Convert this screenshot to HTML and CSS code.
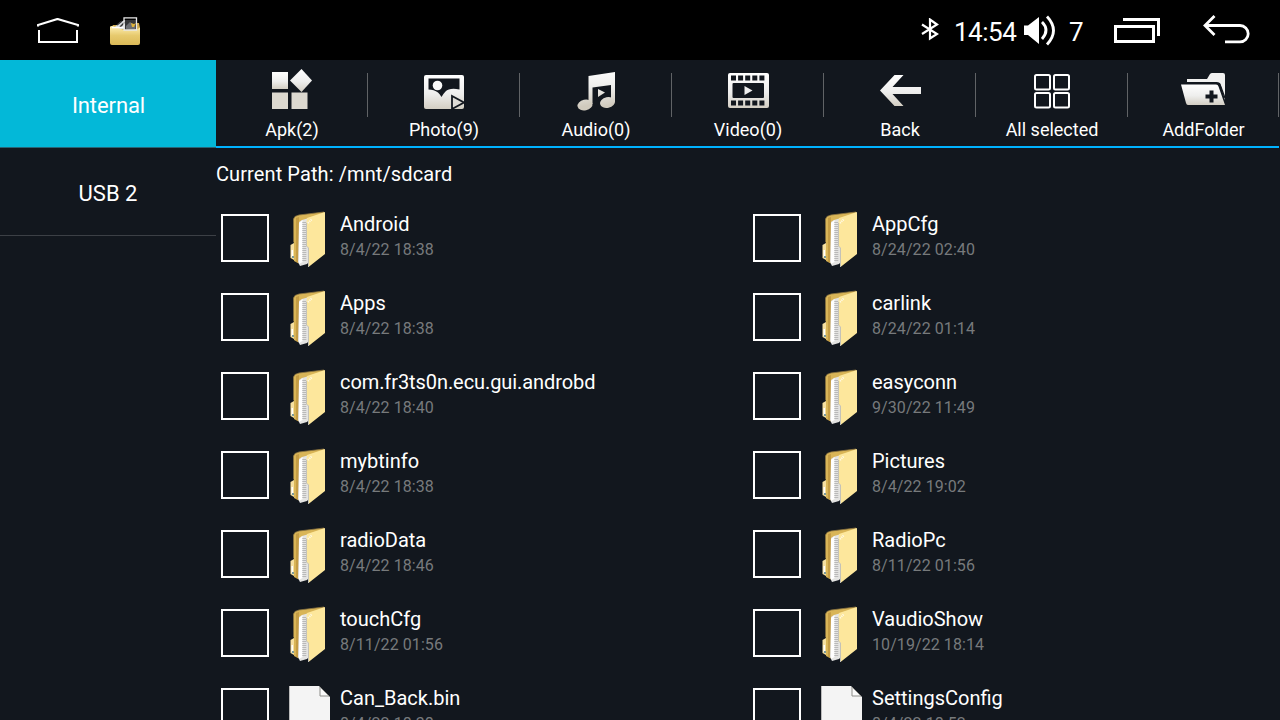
FILE: index.html
```html
<!DOCTYPE html>
<html lang="en">
<head>
<meta charset="utf-8">
<title>File manager</title>
<link rel="stylesheet" href="styles.css">
</head>
<body>
<svg class="defs" width="0" height="0" aria-hidden="true">
  <defs>
    <linearGradient id="silver" x1="0" y1="0" x2="0" y2="1"><stop offset="0" stop-color="#fff"/><stop offset=".55" stop-color="#eeeeed"/><stop offset="1" stop-color="#d3cec3"/></linearGradient>
    <linearGradient id="silverPage" gradientUnits="userSpaceOnUse" x1="0" y1="4" x2="0" y2="42"><stop offset="0" stop-color="#fff"/><stop offset=".5" stop-color="#eeeeec"/><stop offset="1" stop-color="#d0cabd"/></linearGradient>
    <linearGradient id="gold" x1="0" y1="0" x2="0" y2="1"><stop offset="0" stop-color="#fff0b4"/><stop offset=".5" stop-color="#e7ca6e"/><stop offset="1" stop-color="#dbb957"/></linearGradient>
  </defs>
  <symbol id="folder" viewBox="0 0 40 60">
    <path d="M3.500 9 5 6.500 9 5 34 2v8L15 52l-5 2-6-3z" fill="#d9b557"/>
    <path d="M3.500 32V9L5 6.500 9 5 34 2" fill="none" stroke="#8a7340" stroke-width=".8"/>
    <path d="M6 8 9 7v46l-3-1z" fill="#c49c44"/>
    <path d="M.5 35 4 33v17l-3.500-2z" fill="#f6e0a0"/><path d="M1.500 40h1.500v7h-1.500z" fill="#fff"/><path d="M2 46h2v2h-2z" fill="#7a9a9c"/>
    <path d="M9 12 12 10 30 5v35L17 54l-7 2-2-4z" fill="#e4e4e2"/>
    <path d="M9 13 12.500 10v42L9 54z" fill="#fff"/>
    <path d="M14.300 12v40" stroke="#b9b9b9" stroke-width="4" stroke-dasharray="1 1"/>
    <path d="M17 8 35 2v42L18.500 57V38l-2-2V12z" fill="#fde79c"/>
    <path d="M16.500 13v23l2 2v19" fill="none" stroke="#c4c2b8" stroke-width="1"/>
    <path d="M18 13l4-4" stroke="#fffbed" stroke-width="2" stroke-dasharray="1 1"/>
  </symbol>
  <symbol id="file" viewBox="0 0 41 60">
    <path d="M0 0H30L41 11V60H0z" fill="#f4f4f4"/>
    <path d="M.5 0v60" stroke="#bbb"/>
    <path d="M31 1v9h9z" fill="#fafafa" stroke="#8c8c88"/>
  </symbol>
</svg>

<header class="status">
  <svg class="home" width="42" height="28" viewBox="0 0 42 28"><path d="M1 8.500V7L20.500 1 41 7v1.500" fill="none" stroke="#fff" stroke-width="2.200"/><path d="M2 12v12H40V12" fill="none" stroke="#fff" stroke-width="2"/></svg>
  <svg class="app" width="32" height="30" viewBox="0 0 32 30">
    <path d="M1 11 3 8h8l2-2h16l1 5v14H1z" fill="#cda94c"/>
    <path d="M5 10 10 5l5-2v9H3z" fill="#d6d9df"/><path d="M7 8 12 4M10 10l5-5" stroke="#333" stroke-width="1.500"/>
    <path d="M15 3h11v10H15z" fill="#343538"/><path d="M16 9 20 5l5 4v3h-9z" fill="#6c6e73"/><path d="M21 6l3 1 2-1-2 4h-2z" fill="#e0b43b"/>
    <path d="M0 10q0-1 2-1l12 4 13-.5 3-2v15.500q0 2-2 2H2q-2 0-2-2z" fill="url(#gold)"/>
    <path d="M2 10.500h12" stroke="#fff" stroke-width="1.500"/>
    <path d="M14 13V.800h12.500V13z" fill="none" stroke="#e8e8e8" stroke-width="1.300"/>
  </svg>
  <div class="status-right">
    <svg class="bt" width="18" height="24" viewBox="0 0 18 24"><path d="M1 6.500 16 16 9 20.500V1.500L16 6.500 1 16" fill="none" stroke="#fff" stroke-width="2.200"/></svg>
    <span class="clock">14:54</span>
    <svg class="vol" width="32" height="32" viewBox="0 0 32 32"><path d="M0 10.500H4L15 2v27L4 20H0z" fill="#fff"/><path d="M18 7q8 8 0 17" fill="none" stroke="#fff" stroke-width="2.800"/><path d="M23 1.500q13 14 0 28" fill="none" stroke="#fff" stroke-width="2.800"/></svg>
    <span class="level">7</span>
    <svg class="recent" width="48" height="28" viewBox="0 0 48 28"><path d="M1.500 10.500h38v15h-38z" fill="none" stroke="#fff" stroke-width="3"/><path d="M9 3.500H44.500V20" fill="none" stroke="#fff" stroke-width="3"/></svg>
    <svg class="return" width="48" height="30" viewBox="0 0 48 30"><path d="M11.500 1 2 10.500 11.500 20M2 10.500H37a8.200 8.200 0 0 1 0 16.400H22" fill="none" stroke="#fff" stroke-width="2.800"/></svg>
  </div>
</header>

<div class="body">
  <nav class="side">
    <div class="storage active">Internal</div>
    <div class="storage">USB 2</div>
  </nav>
  <main class="main">
    <div class="toolbar">
      <div class="tool"><svg width="48" height="48" viewBox="0 0 48 48"><g fill="url(#silver)"><path d="M4 8h16v17H4z"/><path d="M33.500 5 44 16.500 33.500 28 22 16.500z"/></g><path d="M4 28.500h16V45H4zM23.500 28.500h16V45h-16z" fill="#dcd8cf"/></svg><span>Apk(2)</span></div>
      <div class="tool"><svg width="48" height="48" viewBox="0 0 48 48"><rect x="4" y="11" width="40" height="34" rx="2" fill="url(#silver)"/><path d="M8.500 14.500h31v11q-10-2-14 2-2 2-4 5.500-2-3.500-3.500-4.500-4-3-9.500-3z" fill="#12171e"/><circle cx="17.500" cy="21.500" r="4.800" fill="#fafafa"/><path d="M32 32v13l12-6.500z" fill="#dedbd5" stroke="#12171e" stroke-width="1.800"/></svg><span>Photo(9)</span></div>
      <div class="tool"><svg width="48" height="48" viewBox="0 0 48 48"><g fill="url(#silverPage)"><path d="M16.500 12 43 8v30h-4V21L20.500 23.500V40h-4z"/><ellipse cx="13" cy="41" rx="7.600" ry="5.300" transform="rotate(-12 13 41)"/><ellipse cx="35.500" cy="38.500" rx="7.600" ry="5.300" transform="rotate(-12 35.500 38.500)"/><path d="M26 25v8l7-4.500z"/></g></svg><span>Audio(0)</span></div>
      <div class="tool"><svg width="48" height="48" viewBox="0 0 48 48"><rect x="4" y="9" width="41" height="35" rx="2" fill="url(#silver)"/><path d="M7 14h33.500M7 39h33.500" stroke="#12171e" stroke-width="5" stroke-dasharray="5 2.100"/><rect x="8.500" y="19" width="31.500" height="15" rx="1" fill="#12171e"/><path d="M20.500 22v9l8-4.500z" fill="#eee"/></svg><span>Video(0)</span></div>
      <div class="tool"><svg width="48" height="48" viewBox="0 0 48 48"><path d="M18.500 11H27.500L16.500 23H45v7H16.500l11 12h-9L4 26.500z" fill="url(#silver)"/></svg><span>Back</span></div>
      <div class="tool"><svg width="48" height="48" viewBox="0 0 48 48"><g fill="none" stroke="#fff" stroke-width="2"><rect x="7" y="11" width="15" height="14.500" rx="1.500"/><rect x="26" y="11" width="15" height="14.500" rx="1.500"/><rect x="7" y="29" width="15" height="14.500" rx="1.500"/><rect x="26" y="29" width="15" height="14.500" rx="1.500"/></g></svg><span>All selected</span></div>
      <div class="tool add"><svg width="48" height="48" viewBox="0 0 48 48"><path d="M9 18V15h20l3-5q1-1 2-1h11q2 0 2 2v25l-5-17z" fill="#f1f1f0"/><path d="M3 20.500h35q2 0 2.500 2L47 41H10q-1.500 0-2-2z" fill="url(#silver)"/><path d="M3 18.700h35.500q3 0 4 3L47 34" fill="none" stroke="#12171e" stroke-width="1.300"/><path d="M33.500 26.500v12M27.500 32.500h12" stroke="#12171e" stroke-width="4"/></svg><span>AddFolder</span></div>
    </div>
    <div class="path">Current Path: /mnt/sdcard</div>
    <div class="files">
      <div class="entry"><i class="box"></i><svg class="icon"><use href="#folder"/></svg><div><div class="name">Android</div><div class="date">8/4/22 18:38</div></div></div>
      <div class="entry"><i class="box"></i><svg class="icon"><use href="#folder"/></svg><div><div class="name">AppCfg</div><div class="date">8/24/22 02:40</div></div></div>
      <div class="entry"><i class="box"></i><svg class="icon"><use href="#folder"/></svg><div><div class="name">Apps</div><div class="date">8/4/22 18:38</div></div></div>
      <div class="entry"><i class="box"></i><svg class="icon"><use href="#folder"/></svg><div><div class="name">carlink</div><div class="date">8/24/22 01:14</div></div></div>
      <div class="entry"><i class="box"></i><svg class="icon"><use href="#folder"/></svg><div><div class="name long">com.fr3ts0n.ecu.gui.androbd</div><div class="date">8/4/22 18:40</div></div></div>
      <div class="entry"><i class="box"></i><svg class="icon"><use href="#folder"/></svg><div><div class="name">easyconn</div><div class="date">9/30/22 11:49</div></div></div>
      <div class="entry"><i class="box"></i><svg class="icon"><use href="#folder"/></svg><div><div class="name">mybtinfo</div><div class="date">8/4/22 18:38</div></div></div>
      <div class="entry"><i class="box"></i><svg class="icon"><use href="#folder"/></svg><div><div class="name">Pictures</div><div class="date">8/4/22 19:02</div></div></div>
      <div class="entry"><i class="box"></i><svg class="icon"><use href="#folder"/></svg><div><div class="name">radioData</div><div class="date">8/4/22 18:46</div></div></div>
      <div class="entry"><i class="box"></i><svg class="icon"><use href="#folder"/></svg><div><div class="name">RadioPc</div><div class="date">8/11/22 01:56</div></div></div>
      <div class="entry"><i class="box"></i><svg class="icon"><use href="#folder"/></svg><div><div class="name">touchCfg</div><div class="date">8/11/22 01:56</div></div></div>
      <div class="entry"><i class="box"></i><svg class="icon"><use href="#folder"/></svg><div><div class="name">VaudioShow</div><div class="date">10/19/22 18:14</div></div></div>
      <div class="entry"><i class="box"></i><svg class="icon doc"><use href="#file"/></svg><div><div class="name">Can_Back.bin</div><div class="date">8/4/22 18:38</div></div></div>
      <div class="entry"><i class="box"></i><svg class="icon doc"><use href="#file"/></svg><div><div class="name">SettingsConfig</div><div class="date">8/4/22 18:52</div></div></div>
    </div>
  </main>
</div>
</body>
</html>
```
FILE: styles.css
```css
* { box-sizing: border-box; }
body {
  margin: 0;
  width: 1280px;
  height: 720px;
  overflow: hidden;
  background: #12171e;
  color: #fff;
  font-family: Roboto, "Liberation Sans", sans-serif;
  display: flex;
  flex-direction: column;
}
svg { display: block; flex: none; }
.defs { height: 0; }
.status {
  height: 60px;
  flex: none;
  background: #000;
  display: flex;
  align-items: flex-start;
  padding-left: 37px;
}
.home { margin-top: 18px; }
.app { margin: 17px 0 0 31px; }
.status-right { margin-left: auto; width: 359px; display: flex; font-size: 26px; line-height: 30px; }
.bt { margin-top: 18px; }
.clock { margin: 17px 0 0 15px; width: 70px; white-space: nowrap; letter-spacing: -0.5px; }
.vol { margin-top: 15px; }
.level { margin: 17px 0 0 13px; width: 45px; }
.recent { margin-top: 16px; }
.return { margin: 15px 0 0 41px; }
.body { flex: 1; min-height: 0; display: flex; }
.side { width: 216px; flex: none; }
.storage {
  height: 88px;
  display: flex;
  align-items: center;
  justify-content: center;
  padding-top: 4px;
  font-size: 22px;
  border-bottom: 1px solid #3c4046;
}
.active { background: #03b8d8; border-color: #286476; letter-spacing: -0.1px; padding-left: 1px; }
.main { width: 1063px; flex: none; min-height: 0; overflow: hidden; }
.toolbar { height: 88px; display: flex; border-bottom: 2px solid #00b2ff; }
.tool {
  width: 152px;
  flex: none;
  display: flex;
  flex-direction: column;
  align-items: center;
  padding-top: 4px;
  font-size: 18px;
  line-height: 22px;
  background: linear-gradient(#606366, #606366) no-repeat 151px 13px / 1px 44px;
}
.tool span { margin-top: 7px; }
.add { width: 151px; background-position: 150px 13px; }
.add svg { margin-left: -3px; }
.path { height: 52px; padding-top: 14px; font-size: 20px; line-height: 24px; letter-spacing: 0.1px; }
.files { display: grid; grid-template-columns: 532px 531px; grid-auto-rows: 79px; }
.entry { display: flex; align-items: flex-start; padding-left: 5px; white-space: nowrap; }
.box { width: 48px; height: 48px; flex: none; margin-top: 14px; border: 2px solid #fff; }
.icon { width: 40px; height: 60px; margin: 10px 10px 0 21px; }
.doc { width: 41px; margin: 12px 10px 0 20px; }
.name { margin-top: 12px; font-size: 20px; line-height: 24px; }
.long { letter-spacing: -0.08px; }
.date { margin-top: 4px; font-size: 16px; line-height: 20px; letter-spacing: 0.08px; color: #777a7c; }
```
